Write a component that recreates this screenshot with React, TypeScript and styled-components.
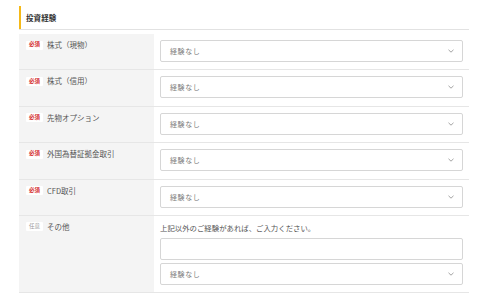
import React from "react";
import styled, { createGlobalStyle } from "styled-components";

const GlobalStyle = createGlobalStyle`
  html, body {
    margin: 0;
    padding: 0;
    background: #ffffff;
    font-family: "Noto Sans CJK JP", "Noto Sans", sans-serif;
  }
`;

const Page = styled.div`
  width: 500px;
  height: 308px;
  padding: 6px 31px 0 19px;
  box-sizing: border-box;
`;

const Heading = styled.div`
  display: flex;
  align-items: center;
  height: 23px;
  border-left: 2px solid #f5b918;
  padding-left: 5px;
  font-size: 7.5px;
  font-weight: 700;
  color: #333;
  letter-spacing: 0.1px;
`;

const HeadingRule = styled.div`
  border-top: 1px solid #e2e2e2;
  margin-bottom: 4px;
`;

const Table = styled.div`
  display: flex;
  flex-direction: column;
`;

const Row = styled.div`
  display: grid;
  grid-template-columns: 135px 1fr;
  border-bottom: 1px solid #e6e6e6;
`;

const LabelCell = styled.div`
  display: flex;
  align-items: flex-start;
  gap: 4px;
  background: #f4f4f4;
  padding: 6px 0 0 7px;
`;

const Badge = styled.span<{ $required: boolean }>`
  display: inline-flex;
  align-items: center;
  justify-content: center;
  width: 17px;
  height: 9px;
  margin-top: 0.5px;
  background: #ffffff;
  border-radius: 1px;
  font-size: 5.5px;
  font-weight: ${(p) => (p.$required ? 700 : 400)};
  color: ${(p) => (p.$required ? "#d3272b" : "#9a9a9a")};
  line-height: 1;
`;

const LabelText = styled.span`
  font-size: 7.5px;
  line-height: 10px;
  color: #555;
`;

const ValueCell = styled.div`
  display: flex;
  flex-direction: column;
  gap: 3px;
  padding: 6px 6px 7.4px 6px;
`;

const Hint = styled.div`
  font-size: 7.4px;
  line-height: 12px;
  color: #555;
  margin-bottom: 1px;
`;

const Field = styled.div`
  display: flex;
  align-items: center;
  justify-content: space-between;
  height: 22px;
  box-sizing: border-box;
  border: 1px solid #d6d6d6;
  border-radius: 2px;
  background: #fff;
  padding: 0 8px 0 9px;
  font-size: 7px;
  letter-spacing: 0.6px;
  color: #7d7d7d;
`;

const Chevron = () => (
  <svg width="6" height="4" viewBox="0 0 6 4">
    <path d="M0.5 0.8 L3 3.2 L5.5 0.8" fill="none" stroke="#8a8a8a" strokeWidth="0.8" />
  </svg>
);

const Select = ({ value }: { value: string }) => (
  <Field>
    <span>{value}</span>
    <Chevron />
  </Field>
);

interface IRowData {
  label: string;
  required: boolean;
  hint?: string;
}

const rows: IRowData[] = [
  { label: "株式（現物）", required: true },
  { label: "株式（信用）", required: true },
  { label: "先物オプション", required: true },
  { label: "外国為替証拠金取引", required: true },
  { label: "CFD取引", required: true },
  { label: "その他", required: false, hint: "上記以外のご経験があれば、ご入力ください。" },
];

export default function App() {
  return (
    <Page>
      <GlobalStyle />
      <Heading>投資経験</Heading>
      <HeadingRule />
      <Table>
        {rows.map((row) => (
          <Row key={row.label}>
            <LabelCell>
              <Badge $required={row.required}>{row.required ? "必須" : "任意"}</Badge>
              <LabelText>{row.label}</LabelText>
            </LabelCell>
            <ValueCell>
              {row.hint && (
                <>
                  <Hint>{row.hint}</Hint>
                  <Field />
                </>
              )}
              <Select value="経験なし" />
            </ValueCell>
          </Row>
        ))}
      </Table>
    </Page>
  );
}
